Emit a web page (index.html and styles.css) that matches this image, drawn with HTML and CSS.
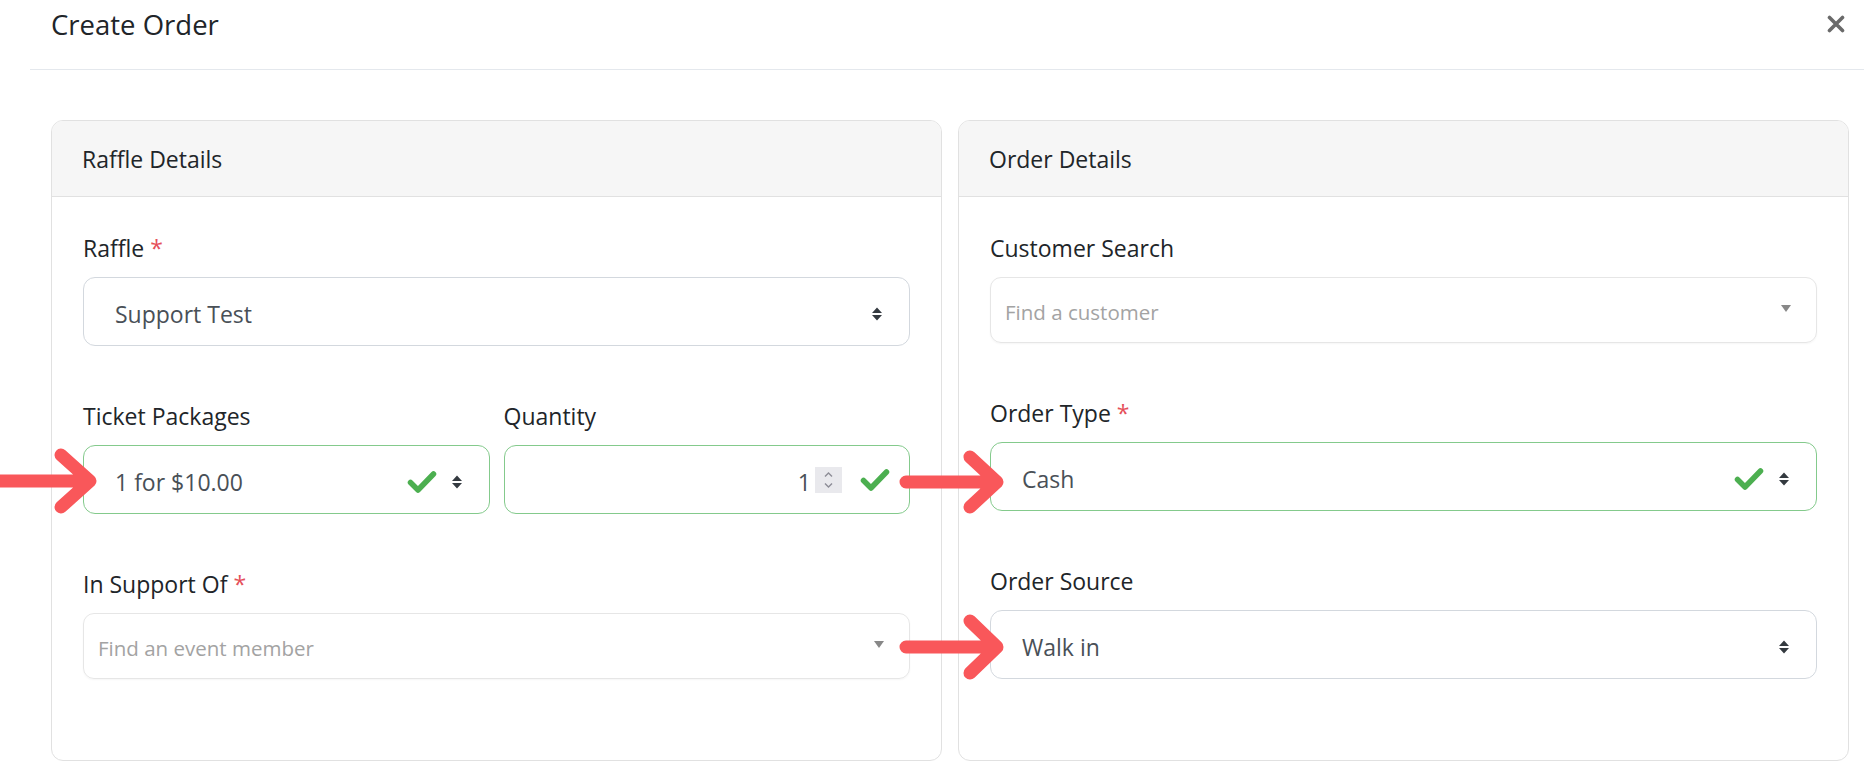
FILE: index.html
```html
<!DOCTYPE html>
<html lang="en">
<head>
    <meta charset="UTF-8">
    <title>Create Order</title>
    <link rel="stylesheet" href="styles.css">
</head>
<body>
    <div class="modal">
        <div class="modal-header">
            <h5 class="modal-title">Create Order</h5>
            <svg class="close" width="18" height="18" viewBox="0 0 18 18"><path d="M2.5 2.5 L15.5 15.5 M15.5 2.5 L2.5 15.5" stroke="#6a6a6a" stroke-width="3.6" stroke-linecap="round"/></svg>
        </div>
        <div class="modal-body">
            <!-- Raffle details -->
            <div class="card">
                <div class="card-header">Raffle Details</div>
                <div class="card-body">
                    <div class="form-group">
                        <label>Raffle <span class="req">*</span></label>
                        <div class="custom-select">
                            <span class="value">Support Test</span>
                            <svg class="sort" width="12" height="16" viewBox="0 0 12 16"><path d="M6 1.5 L11 7 H1 Z M1 9 H11 L6 14.5 Z" fill="#343a40"/></svg>
                        </div>
                    </div>
                    <div class="form-row">
                        <div class="form-group">
                            <label>Ticket Packages</label>
                            <div class="custom-select is-valid">
                                <span class="value">1 for $10.00</span>
                                <svg class="check" width="30" height="24" viewBox="0 0 30 24"><path d="M3.5 12.5 L11 20 L26.5 4" stroke="#4caf50" stroke-width="5.5" fill="none" stroke-linecap="round" stroke-linejoin="round"/></svg>
                                <svg class="sort" width="12" height="16" viewBox="0 0 12 16"><path d="M6 1.5 L11 7 H1 Z M1 9 H11 L6 14.5 Z" fill="#343a40"/></svg>
                            </div>
                        </div>
                        <div class="form-group">
                            <label>Quantity</label>
                            <div class="form-control number is-valid">
                                <span class="value">1</span>
                                <span class="spin">
                                    <svg width="27" height="26" viewBox="0 0 27 26"><path d="M10 9.5 L13.5 6 L17 9.5 M10 16.5 L13.5 20 L17 16.5" stroke="#8c8c96" stroke-width="1.4" fill="none"/></svg>
                                </span>
                                <svg class="check" width="30" height="24" viewBox="0 0 30 24"><path d="M3.5 12.5 L11 20 L26.5 4" stroke="#4caf50" stroke-width="5.5" fill="none" stroke-linecap="round" stroke-linejoin="round"/></svg>
                            </div>
                        </div>
                    </div>
                    <div class="form-group">
                        <label>In Support Of <span class="req">*</span></label>
                        <div class="select2">
                            <span class="placeholder">Find an event member</span>
                            <span class="caret"></span>
                        </div>
                    </div>
                </div>
            </div>
            <!-- Order details -->
            <div class="card">
                <div class="card-header">Order Details</div>
                <div class="card-body">
                    <div class="form-group">
                        <label>Customer Search</label>
                        <div class="select2">
                            <span class="placeholder">Find a customer</span>
                            <span class="caret"></span>
                        </div>
                    </div>
                    <div class="form-group">
                        <label>Order Type <span class="req">*</span></label>
                        <div class="custom-select is-valid">
                            <span class="value">Cash</span>
                            <svg class="check" width="30" height="24" viewBox="0 0 30 24"><path d="M3.5 12.5 L11 20 L26.5 4" stroke="#4caf50" stroke-width="5.5" fill="none" stroke-linecap="round" stroke-linejoin="round"/></svg>
                            <svg class="sort" width="12" height="16" viewBox="0 0 12 16"><path d="M6 1.5 L11 7 H1 Z M1 9 H11 L6 14.5 Z" fill="#343a40"/></svg>
                        </div>
                    </div>
                    <div class="form-group">
                        <label>Order Source</label>
                        <div class="custom-select">
                            <span class="value">Walk in</span>
                            <svg class="sort" width="12" height="16" viewBox="0 0 12 16"><path d="M6 1.5 L11 7 H1 Z M1 9 H11 L6 14.5 Z" fill="#343a40"/></svg>
                        </div>
                    </div>
                </div>
            </div>
        </div>
    </div>

    <!-- Red annotation arrows drawn over the form -->
    <svg class="annotations" width="1864" height="776" viewBox="0 0 1864 776">
        <g stroke="#f9575a" stroke-width="13" stroke-linecap="round" stroke-linejoin="round" fill="none">
            <path d="M-10 481 H89 M61 455 L90 481 L61 507"/>
            <path d="M906 482 H996 M970 457 L997 482 L970 507"/>
            <path d="M906 647 H996 M970 621 L997 647 L970 673"/>
        </g>
    </svg>
</body>
</html>
```

FILE: styles.css
```css
/* Colours */
:root {
    --text: #212529;
    --input-text: #495057;
    --placeholder: #a3a3a3;
    --border: #e1e1e1;
    --input-border: #d3d8de;
    --valid: #84ca8c;
    --required: #e5505a;
}

* {
    margin: 0;
    padding: 0;
    box-sizing: border-box;
}

body {
    font-family: "Open Sans", "Noto Sans", sans-serif;
    color: var(--text);
    background: #fff;
    width: 1864px;
    height: 776px;
    overflow: hidden;
    position: relative;
}

/* Modal header */
.modal {
    margin-left: 30px;
}

.modal-header {
    display: flex;
    justify-content: space-between;
    align-items: flex-start;
    height: 70px;
    padding: 5px 19px 0 21px;
    border-bottom: 1px solid #e4e8ed;
}

.modal-title {
    font-size: 27.5px;
    font-weight: 400;
    line-height: 40px;
}

.close {
    margin-top: 10px;
}

/* Two cards side by side */
.modal-body {
    display: grid;
    grid-template-columns: 1fr 1fr;
    gap: 16px;
    padding: 50px 15px 0 21px;
}

.card {
    border: 1px solid var(--border);
    border-radius: 12px;
    height: 641px;
    overflow: hidden;
}

.card-header {
    background: #f6f6f6;
    border-bottom: 1px solid var(--border);
    padding: 21px 31px 20px 30px;
    font-size: 23px;
    line-height: 34px;
}

.card-body {
    padding: 34px 31px 28px;
}

/* Form fields */
.form-group {
    margin-bottom: 53px;
}

.form-row {
    display: grid;
    grid-template-columns: 1fr 1fr;
    gap: 14px;
}

label {
    display: block;
    font-size: 23px;
    line-height: 34px;
    margin-bottom: 12px;
}

.req {
    color: var(--required);
}

.custom-select,
.form-control {
    display: flex;
    align-items: center;
    height: 69px;
    padding: 4px 26px 0 31px;
    border: 1px solid var(--input-border);
    border-radius: 12px;
    font-size: 23px;
    color: var(--input-text);
}

.custom-select .value {
    flex: 1;
    white-space: nowrap;
}

.custom-select .check {
    margin-right: 14px;
}

.is-valid {
    border-color: var(--valid);
}

/* Number input with spinner */
.form-control.number {
    justify-content: flex-end;
    padding-right: 19px;
}

.spin {
    display: flex;
    width: 27px;
    height: 26px;
    margin-left: 4px;
    margin-top: -3px;
    background: #e9e9ed;
}

.number .check {
    margin-left: 18px;
    margin-top: -3px;
}

/* Select2 style search boxes */
.select2 {
    display: flex;
    align-items: center;
    height: 66px;
    padding: 4px 25px 0 14px;
    border: 1px solid #e6e6e6;
    border-radius: 11px;
    box-shadow: 0 1px 2px rgba(0, 0, 0, 0.04);
    font-size: 20.5px;
}

.select2 .placeholder {
    flex: 1;
    color: var(--placeholder);
}

.caret {
    width: 0;
    height: 0;
    margin-top: -7px;
    border-left: 5.5px solid transparent;
    border-right: 5.5px solid transparent;
    border-top: 7px solid #888;
}

/* Annotation layer */
.annotations {
    position: absolute;
    top: 0;
    left: 0;
    pointer-events: none;
}
```
